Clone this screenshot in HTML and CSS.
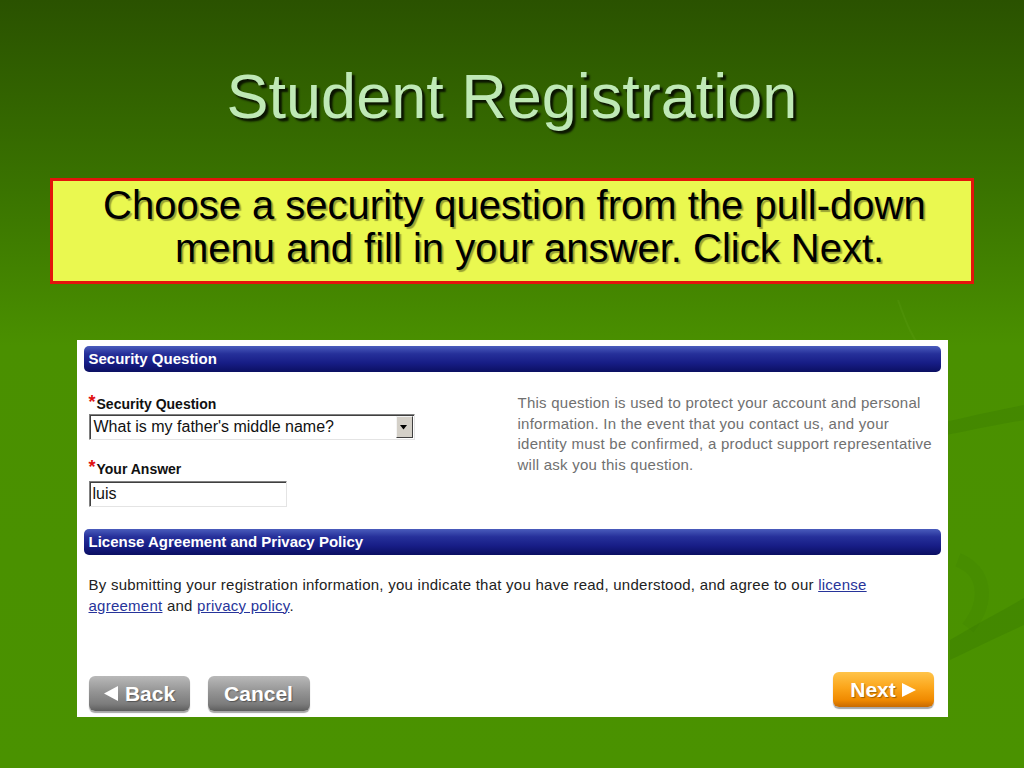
FILE: index.html
```html
<!DOCTYPE html>
<html lang="en">
<head>
  <meta charset="UTF-8">
  <meta name="viewport" content="width=device-width, initial-scale=1.0">
  <title>Student Registration</title>
  <link rel="stylesheet" href="styles.css">
</head>
<body>
  <svg class="swoosh" width="1024" height="768" viewBox="0 0 1024 768" aria-hidden="true">
    <path d="M898 300 C905 320 912 340 930 360" stroke="#6fae2a" stroke-width="2" fill="none" opacity="0.15"/>
    <path d="M905 432 C950 420 990 412 1024 405 L1024 420 C990 426 950 434 905 444 Z" fill="#2f6a00" opacity="0.2"/>
    <path d="M950 640 C975 625 1000 612 1024 598 L1024 625 C1000 636 975 648 950 660 Z" fill="#2f6a00" opacity="0.22"/>
    <path d="M958 560 C985 570 990 600 968 628" stroke="#2f6a00" stroke-width="14" fill="none" opacity="0.1"/>
  </svg>

  <div class="slide">
    <h1 class="title">Student Registration</h1>

    <div class="callout">
      <p>Choose a security question from the pull-down menu and fill in your answer. Click Next.</p>
    </div>

    <div class="panel">
      <div class="bar">Security Question</div>
      <div class="question-row">
        <div class="fields">
          <label class="field-label"><span class="req">*</span>Security Question</label>
          <div class="select">
            <span class="select-text">What is my father's middle name?</span>
            <span class="select-btn">
              <svg width="8" height="5" viewBox="0 0 8 5"><path d="M0 0 H7 L3.5 4.5 Z" fill="#000"/></svg>
            </span>
          </div>
          <label class="field-label answer-label"><span class="req">*</span>Your Answer</label>
          <div class="input">luis</div>
        </div>
        <p class="help">This question is used to protect your account and personal information. In the event that you contact us, and your identity must be confirmed, a product support representative will ask you this question.</p>
      </div>

      <div class="bar">License Agreement and Privacy Policy</div>
      <p class="agree">By submitting your registration information, you indicate that you have read, understood, and agree to our <a href="#">license</a> <a href="#">agreement</a> and <a href="#">privacy policy</a>.</p>

      <div class="actions">
        <button class="btn btn-gray">
          <svg width="16" height="17" viewBox="0 0 16 17"><path d="M15 1 V16 L1 8.5 Z" fill="#fff"/></svg>
          Back
        </button>
        <button class="btn btn-gray">Cancel</button>
        <button class="btn btn-orange">
          Next
          <svg width="14" height="16" viewBox="0 0 14 16"><path d="M0 1 V15 L14 8 Z" fill="#fff"/></svg>
        </button>
      </div>
    </div>
  </div>
</body>
</html>
```

FILE: styles.css
```css
/* Slide */
body {
  margin: 0;
  width: 1024px;
  height: 768px;
  overflow: hidden;
  position: relative;
  font-family: "Liberation Sans", Arial, sans-serif;
  background: linear-gradient(to bottom, #2a5200 0%, #3a7400 25%, #4a9000 45%, #4a9200 100%);
}
.swoosh {
  position: absolute;
  top: 0; left: 0;
  pointer-events: none;
}
.slide {
  position: relative;
  display: flex;
  flex-direction: column;
  align-items: center;
  padding-top: 60px;
}
.title {
  margin: 0;
  font-size: 63px;
  line-height: 72px;
  font-weight: normal;
  color: #bfe9b6;
  text-shadow: 3px 3px 2px rgba(0,0,0,0.8);
}
/* Instruction box */
.callout {
  box-sizing: border-box;
  width: 924px;
  height: 106px;
  margin-top: 46px;
  background: #eaf850;
  border: 3px solid #e3140c;
  padding: 3px 20px 0 122px;
}
.callout p {
  margin: 0;
  text-indent: -72px;
  font-size: 40px;
  line-height: 43px;
  color: #000;
  text-shadow: 2px 2px 1px rgba(0,0,0,0.35);
}
/* Screenshot panel */
.panel {
  box-sizing: border-box;
  width: 871px;
  height: 377px;
  margin-top: 56px;
  background: #fff;
  padding: 6px 7px 6px;
  display: flex;
  flex-direction: column;
}
.bar {
  height: 26px;
  line-height: 26px;
  padding-left: 5px;
  border-radius: 5px;
  color: #fff;
  font-weight: bold;
  font-size: 15px;
  background: linear-gradient(to bottom, #4a5cbc 0%, #26309a 30%, #171d86 65%, #0b0f62 100%);
}
.question-row {
  display: grid;
  grid-template-columns: 429px 1fr;
  padding: 24px 0 0 5px;
  height: 133px;
}
.field-label {
  display: block;
  font-size: 14px;
  font-weight: bold;
  line-height: 17px;
  color: #111;
}
.req {
  color: #e01010;
  font-size: 18px;
  font-weight: bold;
  margin-right: 1px;
  vertical-align: 1px;
  line-height: 10px;
}
.answer-label { margin-top: 21px; }
.select, .input {
  box-sizing: border-box;
  height: 26px;
  margin-top: 1px;
  border: 1px solid;
  border-color: #808080 #e4e4e4 #e4e4e4 #808080;
  box-shadow: inset 1px 1px 0 #404040;
  background: #fff;
  display: flex;
  align-items: center;
  font-size: 16px;
  color: #111;
}
.select { width: 326px; }
.select-text { flex: 1; padding-left: 4px; }
.select-btn {
  width: 17px;
  height: 22px;
  margin-right: 1px;
  box-sizing: border-box;
  background: #d4d0c8;
  border: 1px solid;
  border-color: #f4f4f4 #404040 #404040 #f4f4f4;
  display: flex;
  align-items: center;
  justify-content: center;
}
.input { width: 198px; padding-left: 3px; margin-top: 3px; }
.help, .agree {
  margin: 0;
  font-size: 15px;
  line-height: 20.5px;
  letter-spacing: 0.25px;
}
.help {
  color: #707070;
  margin-top: -3px;
}
.agree {
  color: #222;
  padding: 20px 5px 0;
}
.agree a { color: #27349a; }
/* Buttons */
.actions {
  margin-top: auto;
  display: flex;
  align-items: flex-end;
  gap: 18px;
  padding: 0 7px 0 5px;
}
.btn {
  height: 35px;
  width: 101px;
  border: none;
  border-radius: 6px;
  color: #fff;
  font-family: inherit;
  font-weight: bold;
  font-size: 21px;
  display: flex;
  align-items: center;
  justify-content: center;
  gap: 6px;
  padding: 0;
  text-shadow: 1px 1px 1px rgba(0,0,0,0.35);
  box-shadow: 0 2px 1px rgba(0,0,0,0.35);
}
.btn-gray {
  background: linear-gradient(to bottom, #b9b9b9 0%, #949494 45%, #7c7c7c 80%, #5e5e5e 100%);
}
.btn-gray + .btn-gray { width: 102px; }
.btn-orange {
  margin-left: auto;
  margin-bottom: 4px;
  background: linear-gradient(to bottom, #ffc44a 0%, #fba51a 45%, #f08a00 80%, #c86a00 100%);
}
```
